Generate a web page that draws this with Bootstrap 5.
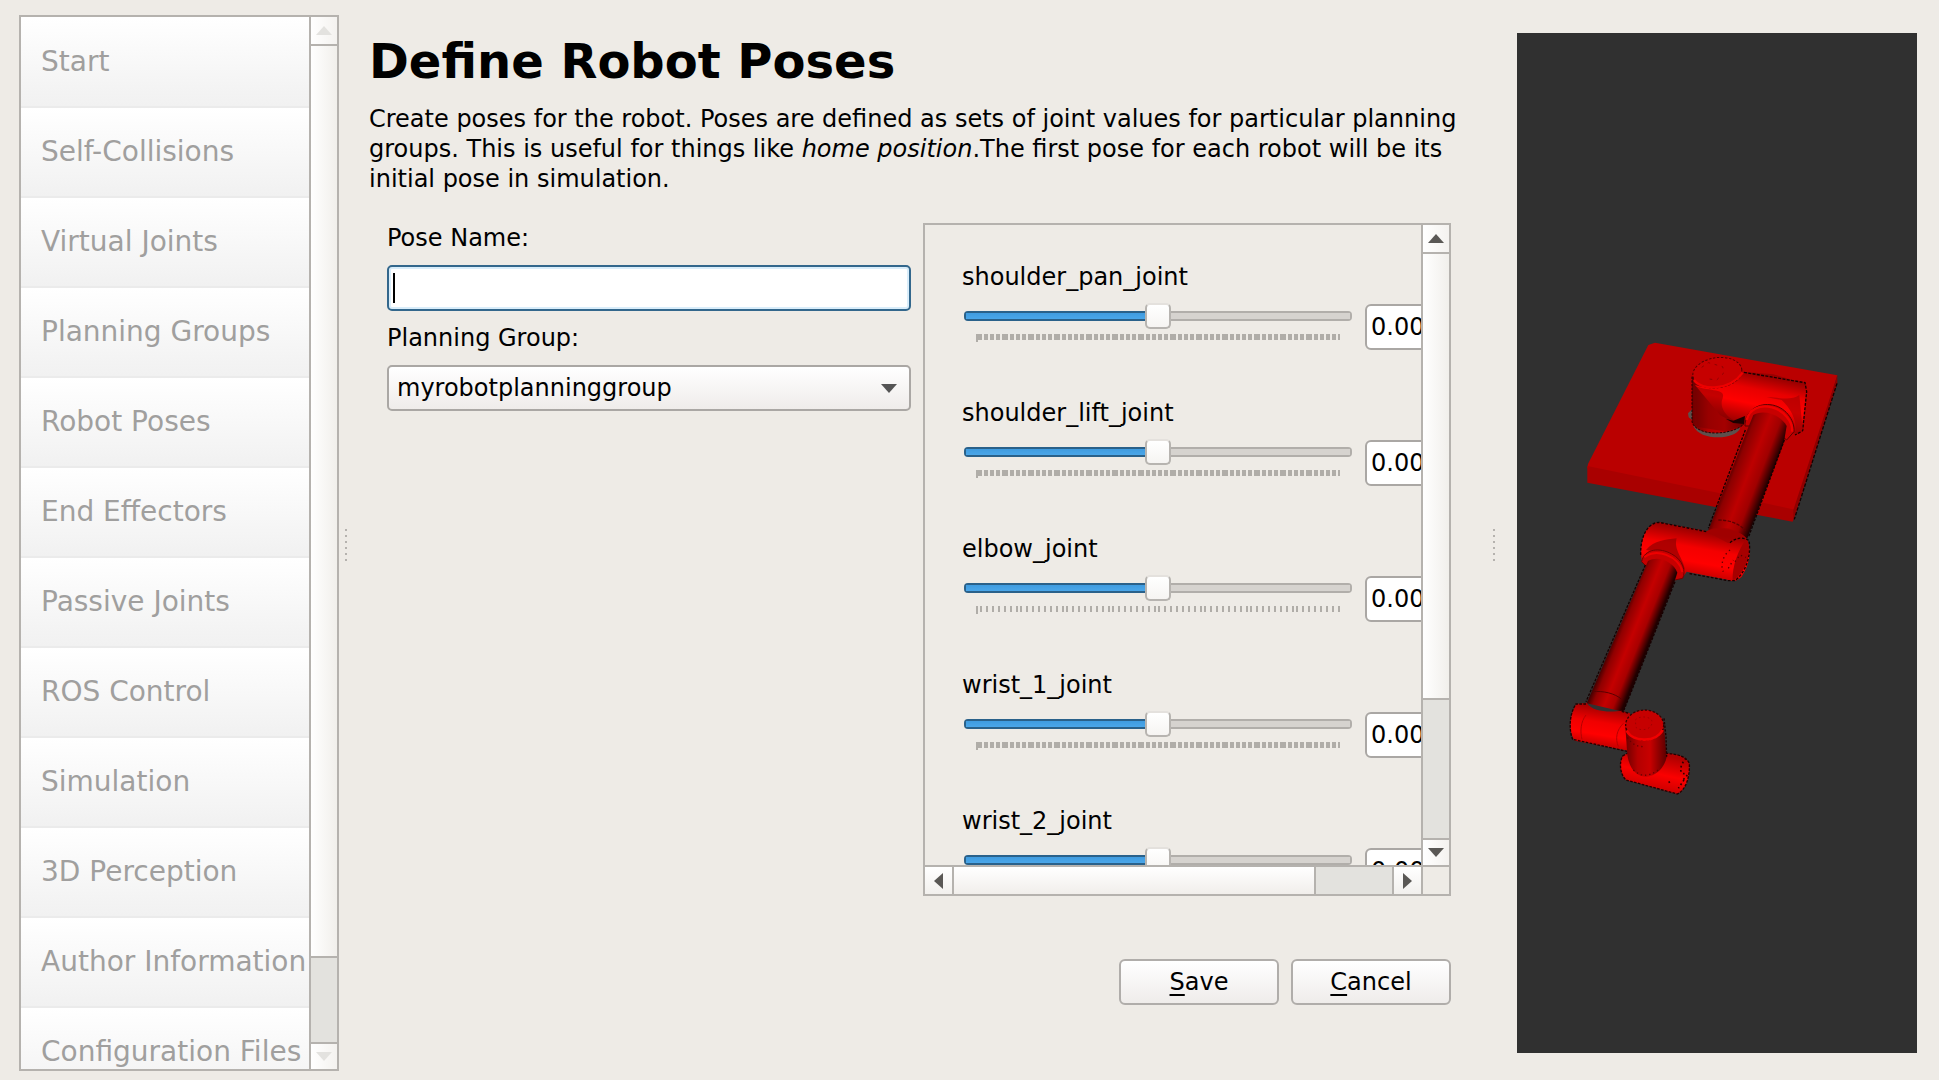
<!DOCTYPE html>
<html lang="en">
<head>
<meta charset="utf-8">
<meta name="viewport" content="width=device-width, initial-scale=1">
<title>Define Robot Poses</title>
<link href="https://cdn.jsdelivr.net/npm/bootstrap@5.3.0/dist/css/bootstrap.min.css" rel="stylesheet">
<style>
  :root { --edge: #b5b2ae; --face: #eeebe6; --groove: #e3e2de; }
  body { font-family: "DejaVu Sans", Verdana, sans-serif; font-size: 24px; line-height: 30px; color: #000; background: var(--face); }
  .app-shell { height: 100vh; padding: 15px 22px 9px 19px; }

  /* navigation list */
  .side-nav { width: 320px; border: 2px solid var(--edge); background: #fff; }
  .side-list { padding-top: 1px; }
  .side-list .list-group-item { height: 90px; flex: none; padding: 0 0 0 20px; border: 0; border-bottom: 2px solid #ebebeb; border-radius: 0;
    font-size: 28px; line-height: 88px; white-space: nowrap; color: #a09f9e; background: linear-gradient(#fff, #f1f1f1); }

  /* scroll bars */
  .vbar { width: 28px; border-left: 2px solid var(--edge); background: var(--groove); }
  .hbar { height: 29px; border-top: 2px solid var(--edge); background: var(--groove); }
  .bar-btn { padding: 0; border: 0; background: linear-gradient(90deg, #fff, #f4f2ef); display: flex; align-items: center; justify-content: center; }
  .vbar .bar-btn { height: 27px; }
  .hbar .bar-btn { width: 27px; background: linear-gradient(#fff, #f2f0ed); }
  .vthumb { background: linear-gradient(90deg, #fff, #f1efeb); border: solid var(--edge); border-width: 2px 0; }
  .hthumb { background: linear-gradient(#fff, #f1eeeb); border: solid var(--edge); border-width: 0 2px; }
  .bar-btn svg { fill: #5a5855; display: block; }
  .side-nav .bar-btn svg { fill: #e3e2df; }
  .side-nav .vthumb { flex: 903; } .side-nav .vrest { flex: 83; }
  .joint-pane .vthumb { flex: 449; } .joint-pane .vrest { flex: 139; }
  .joint-pane .hthumb { flex: 364; } .joint-pane .hrest { flex: 77; }
  .bar-end { border-top: 2px solid var(--edge); }
  .hbar .bar-end { border-top: 0; border-left: 2px solid var(--edge); width: 29px; }
  .bar-corner { width: 28px; border-left: 2px solid var(--edge); background: var(--face); }

  /* splitter grips */
  .grip { width: 30px; padding: 4px 0 0 6px; }
  .grip.wide-grip { width: 48px; padding-left: 24px; }
  .grip-dots { width: 2px; height: 32px; background: repeating-linear-gradient(#b5b2ae 0 2px, transparent 2px 6px); }

  /* main column */
  .page-title { font-size: 48px; line-height: 56px; font-weight: 700; margin: 18px 0 15px; }
  .intro { margin: 0 0 29px; }
  .form-area { padding: 0 18px; gap: 12px; }
  .form-area > * { flex: 1 1 0; min-width: 0; }
  .field { height: 46px; font-size: 24px; line-height: 30px; padding: 6px 8px; border: 2px solid #aaa7a4; border-radius: 5px; color: #000; width: 100%; }
  .field.name-field { border-color: #33678c; box-shadow: inset 0 0 0 2px #d9edfa; background: linear-gradient(#000, #000) 4px 50% / 2px 30px no-repeat, #fff; }
  .field.group-field { appearance: none; background: url("data:image/svg+xml,%3Csvg xmlns='http://www.w3.org/2000/svg' viewBox='0 0 16 9'%3E%3Cpath fill='%23555' d='M0 0h16L8 9z'/%3E%3C/svg%3E") right 12px center / 16px 9px no-repeat, linear-gradient(#fff, #efecea); }
  .field-label { margin: 0 0 12px; display: block; }
  .field + .field-label { margin-top: 12px; }
  .joint-pane { height: 673px; border: 2px solid var(--edge); }
  .joint-list { padding: 37px 0 0 37px; gap: 28px; width: 640px; }
  .joint-item { height: 108px; flex: none; }
  .joint-ctl { gap: 12px; margin: 12px 0 0 2px; }
  .joint-name { display: block; height: 30px; }
  .slide-box { width: 389px; }
  .joint-range { appearance: none; -webkit-appearance: none; display: block; width: 388px; height: 24px; margin: 0; background: transparent; }
  .joint-range::-webkit-slider-runnable-track { height: 10px; border-radius: 4px;
    background: linear-gradient(#2a618a, #2a618a) 0 0 / 50% 2px no-repeat, linear-gradient(#2a618a, #2a618a) 0 100% / 50% 2px no-repeat, linear-gradient(#2a618a, #2a618a) 0 0 / 2px 100% no-repeat, linear-gradient(#3c98dc, #4eaaec) 0 0 / 50% 100% no-repeat, linear-gradient(#b1aeaa, #b1aeaa) 0 0 / 100% 2px no-repeat, linear-gradient(#b1aeaa, #b1aeaa) 0 100% / 100% 2px no-repeat, linear-gradient(#b1aeaa, #b1aeaa) 100% 0 / 2px 100% no-repeat, #d6d3cf; }
  .joint-range::-webkit-slider-thumb { appearance: none; -webkit-appearance: none; width: 26px; height: 26px; margin-top: -8px; border: 2px solid #b7b4b0; border-top-color: #e4e1dd; border-radius: 5px; background: linear-gradient(#fff, #f6f4f2); }
  .tick-marks { display: block; width: 366px; height: 8px; margin: 6px 0 0 12px; }
  .joint-value { width: 130px; padding: 6px 4px; border-radius: 6px; background: #fff; }

  .dlg-btn { width: 160px; height: 46px; padding: 0; font-size: 24px; line-height: 30px; color: #000; border: 2px solid #b0adaa; border-radius: 6px; background: linear-gradient(#fff, #efecea); }
  .dlg-btn u { text-underline-offset: 4px; text-decoration-thickness: 2px; text-decoration-skip-ink: none; }
  .actions { gap: 12px; padding: 0 18px; margin-top: 63px; }

  .view3d { width: 400px; margin: 18px 0 18px; background: #303030; }
</style>
</head>
<body>
<div class="app-shell d-flex overflow-hidden">
  <nav class="side-nav d-flex flex-shrink-0" aria-label="Setup steps">
    <div class="side-list list-group rounded-0 flex-grow-1 overflow-hidden">
      <a class="list-group-item disabled" aria-disabled="true" href="#">Start</a>
      <a class="list-group-item disabled" aria-disabled="true" href="#">Self-Collisions</a>
      <a class="list-group-item disabled" aria-disabled="true" href="#">Virtual Joints</a>
      <a class="list-group-item disabled" aria-disabled="true" href="#">Planning Groups</a>
      <a class="list-group-item disabled" aria-disabled="true" href="#">Robot Poses</a>
      <a class="list-group-item disabled" aria-disabled="true" href="#">End Effectors</a>
      <a class="list-group-item disabled" aria-disabled="true" href="#">Passive Joints</a>
      <a class="list-group-item disabled" aria-disabled="true" href="#">ROS Control</a>
      <a class="list-group-item disabled" aria-disabled="true" href="#">Simulation</a>
      <a class="list-group-item disabled" aria-disabled="true" href="#">3D Perception</a>
      <a class="list-group-item disabled" aria-disabled="true" href="#">Author Information</a>
      <a class="list-group-item disabled" aria-disabled="true" href="#">Configuration Files</a>
    </div>
    <div class="vbar d-flex flex-column flex-shrink-0">
      <button class="bar-btn" type="button" disabled aria-label="Scroll up"><svg width="16" height="9" viewBox="0 0 16 9"><path d="M0 9h16L8 0z"/></svg></button>
      <div class="vthumb"></div><div class="vrest"></div>
      <button class="bar-btn bar-end" type="button" disabled aria-label="Scroll down"><svg width="16" height="9" viewBox="0 0 16 9"><path d="M0 0h16L8 9z"/></svg></button>
    </div>
  </nav>
  <div class="grip d-flex align-items-center flex-shrink-0"><div class="grip-dots"></div></div>

  <main class="flex-grow-1">
    <h1 class="page-title">Define Robot Poses</h1>
    <p class="intro">Create poses for the robot. Poses are defined as sets of joint values for particular planning groups. This is useful for things like <i>home position</i>.The first pose for each robot will be its initial pose in simulation.</p>
    <div class="form-area d-flex">
      <form>
        <label class="field-label" for="poseName">Pose Name:</label>
        <input class="field name-field" id="poseName" type="text">
        <label class="field-label" for="planGroup">Planning Group:</label>
        <select class="field group-field" id="planGroup"><option>myrobotplanninggroup</option></select>
      </form>
      <section class="joint-pane d-flex flex-column" aria-label="Joint values">
        <div class="d-flex flex-grow-1 overflow-hidden">
          <div class="flex-grow-1 overflow-hidden">
            <div class="joint-list d-flex flex-column" id="joints"></div>
          </div>
          <div class="vbar d-flex flex-column flex-shrink-0">
            <button class="bar-btn" type="button" aria-label="Scroll up"><svg width="16" height="9" viewBox="0 0 16 9"><path d="M0 9h16L8 0z"/></svg></button>
            <div class="vthumb"></div><div class="vrest"></div>
            <button class="bar-btn bar-end" type="button" aria-label="Scroll down"><svg width="16" height="9" viewBox="0 0 16 9"><path d="M0 0h16L8 9z"/></svg></button>
          </div>
        </div>
        <div class="hbar d-flex flex-shrink-0">
          <button class="bar-btn" type="button" aria-label="Scroll left"><svg width="9" height="16" viewBox="0 0 9 16"><path d="M9 0v16L0 8z"/></svg></button>
          <div class="hthumb"></div><div class="hrest"></div>
          <button class="bar-btn bar-end" type="button" aria-label="Scroll right"><svg width="9" height="16" viewBox="0 0 9 16"><path d="M0 0v16L9 8z"/></svg></button>
          <div class="bar-corner"></div>
        </div>
      </section>
    </div>
    <div class="actions d-flex justify-content-end">
      <button class="dlg-btn" type="button"><u>S</u>ave</button>
      <button class="dlg-btn" type="button"><u>C</u>ancel</button>
    </div>
  </main>
  <div class="grip wide-grip d-flex align-items-center flex-shrink-0"><div class="grip-dots"></div></div>

  <div class="view3d flex-shrink-0">
    <svg width="100%" height="100%" viewBox="1517 33 400 1020" preserveAspectRatio="xMidYMid slice" role="img" aria-label="Robot model">
      <defs>
        <linearGradient id="tubeA" gradientUnits="userSpaceOnUse" x1="505" y1="430" x2="630" y2="478"><stop offset="0" stop-color="#240000"/><stop offset=".2" stop-color="#8c0000"/><stop offset=".5" stop-color="#bd0000"/><stop offset=".75" stop-color="#a00000"/><stop offset="1" stop-color="#180000"/></linearGradient>
        <linearGradient id="tubeB" gradientUnits="userSpaceOnUse" x1="205" y1="365" x2="305" y2="405"><stop offset="0" stop-color="#300000"/><stop offset=".2" stop-color="#900000"/><stop offset=".5" stop-color="#c40000"/><stop offset=".75" stop-color="#a80000"/><stop offset="1" stop-color="#200000"/></linearGradient>
        <linearGradient id="base" x1="0" x2="1"><stop offset="0" stop-color="#6c0000"/><stop offset=".3" stop-color="#b40000"/><stop offset=".6" stop-color="#c80000"/><stop offset="1" stop-color="#5a0000"/></linearGradient>
        <linearGradient id="arm" gradientUnits="userSpaceOnUse" x1="600" y1="165" x2="570" y2="310"><stop offset="0" stop-color="#9a0000"/><stop offset=".3" stop-color="#e80000"/><stop offset=".6" stop-color="#ff0000"/><stop offset="1" stop-color="#a00000"/></linearGradient>
        <linearGradient id="elbow" gradientUnits="userSpaceOnUse" x1="450" y1="95" x2="425" y2="235"><stop offset="0" stop-color="#a00000"/><stop offset=".35" stop-color="#f40000"/><stop offset=".65" stop-color="#ff0000"/><stop offset="1" stop-color="#b80000"/></linearGradient>
        <linearGradient id="wrist" gradientUnits="userSpaceOnUse" x1="165" y1="625" x2="145" y2="748"><stop offset="0" stop-color="#a80000"/><stop offset=".35" stop-color="#f00000"/><stop offset=".65" stop-color="#ff0000"/><stop offset="1" stop-color="#b00000"/></linearGradient>
        <linearGradient id="tool" gradientUnits="userSpaceOnUse" x1="340" y1="765" x2="315" y2="880"><stop offset="0" stop-color="#b00000"/><stop offset=".5" stop-color="#fb0000"/><stop offset="1" stop-color="#c00000"/></linearGradient>
      </defs>
      <!-- table plate, shoulder and upper arm -->
      <g transform="translate(1560 320) scale(.33333)">
        <path fill="#ba0000" d="M285 68 832 166 708 575 82 445 84 432 265 75z"/>
        <path fill="#a90000" d="M82 438 480 520 708 570 698 605 82 488z"/>
        <path fill="#900000" d="M832 166 832 190 700 603 700 570z"/>
        <path fill="none" stroke="#160000" stroke-width="4" stroke-dasharray="10 5" d="M831 190 703 598"/>
        <path fill="#5d504c" d="M396 268 384 280 386 292 396 300zM400 318C412 342 440 352 475 352 505 351 530 343 540 326L535 312 405 312z"/>
        <path fill="url(#base)" stroke="#200000" stroke-width="3" stroke-dasharray="7 4" d="M396 170V305C400 325 430 340 470 339 505 338 535 328 552 312L560 160z"/>
        <path fill="url(#arm)" d="M405 195C470 215 515 195 550 155L640 163 735 190C742 235 735 300 718 342L690 340C690 300 640 262 600 266 575 270 560 290 555 312 530 305 500 298 480 285z"/>
        <path fill="none" stroke="#180000" stroke-width="4" stroke-dasharray="9 4" d="M552 157 735 188 740 215 728 332 705 345"/>
        <path fill="#6f0000" d="M405 198C450 215 500 205 488 235 476 262 500 300 550 312L500 335 410 320z" opacity=".4"/>
        <ellipse cx="472" cy="158" rx="74" ry="45" fill="#c60000" stroke="#500000" stroke-width="3" stroke-dasharray="7 5" transform="rotate(-8 472 158)"/>
        <path fill="none" stroke="#ed0000" stroke-width="7" d="M402 180C425 213 510 212 548 158"/>
        <path fill="none" stroke="#8d0000" stroke-width="3" stroke-dasharray="8 14" d="M425 142 445 128 488 140 492 158 470 180 440 176"/>
        <path fill="#1d0000" d="M497 296 520 302 555 288 552 312 520 309z"/>
        <path fill="#a00000" d="M718 225 728 330 707 342C712 305 695 268 665 240L620 232C650 230 690 245 718 225z" opacity=".6"/>
        <path fill="#c70000" stroke="#5a0000" stroke-width="3" d="M555 318C555 275 590 250 630 254 675 258 705 300 702 335L680 360 655 340 580 318z"/>
        <path fill="none" stroke="#f00000" stroke-width="7" d="M560 300C568 268 598 253 636 262 670 270 700 305 696 335"/>
        <path fill="url(#tubeA)" d="M580 285C605 268 660 280 680 318L672 365 562 655 445 630 565 322z"/>
        <path fill="none" stroke="#100000" stroke-width="4" stroke-dasharray="8 4" d="M556 330 445 625M673 360 566 650"/>
        <path fill="none" stroke="#5c0000" stroke-width="4" stroke-dasharray="10 4" d="M475 600C510 600 540 612 556 632"/>
      </g>
      <!-- elbow, forearm and wrist -->
      <g transform="translate(1550 500) scale(.33333)">
        <path fill="url(#elbow)" d="M325 66 470 93C510 80 570 90 590 115 603 140 605 185 575 230 563 242 550 246 535 240L410 215 395 236 275 180C268 115 290 70 325 66z"/>
        <path fill="#a00000" opacity=".7" d="M470 95C490 75 560 80 582 112L535 130z"/>
        <path fill="#a60000" d="M590 115C605 150 598 205 548 244 545 200 565 150 590 115z"/>
        <path fill="none" stroke="#160000" stroke-width="4" stroke-dasharray="8 5" d="M272 165C270 105 298 62 332 68L470 95M540 128C560 110 585 112 597 122 603 155 595 210 555 242L535 242 415 220"/>
        <path fill="none" stroke="#5b0000" stroke-width="4" stroke-dasharray="4 10" d="M540 150C520 165 510 195 520 215M555 185 570 165 588 172M535 205 550 180"/>
        <path fill="#880000" opacity=".65" d="M288 150C315 120 345 120 380 115 370 150 400 175 405 210 375 175 330 155 288 150z"/>
        <path fill="#c60000" stroke="#700000" stroke-width="3" d="M275 185C283 145 330 142 365 162 400 180 408 215 398 235L375 240 290 200z"/>
        <path fill="none" stroke="#f00000" stroke-width="6" d="M283 172C315 142 388 168 397 216"/>
        <path fill="url(#tubeB)" d="M294 183C325 165 370 185 382 218L372 250 220 635 110 610z"/>
        <path fill="none" stroke="#160000" stroke-width="4" stroke-dasharray="8 4" d="M286 195 108 605M375 245 222 630"/>
        <path fill="none" stroke="#580000" stroke-width="3" d="M128 575C160 572 195 580 215 598"/>
        <path fill="url(#wrist)" d="M80 612 110 608C130 640 190 635 215 632L240 640 250 755 75 722C55 700 58 640 80 612z"/>
        <path fill="none" stroke="#220000" stroke-width="4" stroke-dasharray="8 4" d="M108 612 78 612C58 640 56 690 68 718L240 756M215 634 238 640"/>
        <path fill="none" stroke="#b40000" stroke-width="3" d="M108 645C92 665 90 695 96 718M220 670C200 690 195 715 205 740"/>
        <path fill="url(#tool)" stroke="#240000" stroke-width="4" stroke-dasharray="8 4" d="M218 768 240 755 350 760C385 762 408 770 418 790 420 830 408 870 382 882L228 840C208 820 208 785 218 768z"/>
        <path fill="none" stroke="#300000" stroke-width="5" stroke-dasharray="5 8" d="M408 775C385 800 390 825 405 820M402 840 385 865M360 845 350 850M412 825 395 845"/>
        <path fill="url(#base)" d="M226 680 232 765C238 805 258 830 290 830 320 828 345 800 350 770L342 680z"/>
        <path fill="none" stroke="#1c0000" stroke-width="4" stroke-dasharray="7 4" d="M342 655 348 710 350 770"/>
        <path fill="none" stroke="#650000" stroke-width="4" stroke-dasharray="4 9" d="M232 712C250 738 265 740 285 740M250 810C275 832 295 830 325 810"/>
        <ellipse cx="284" cy="675" rx="57" ry="45" fill="#c60000" stroke="#380000" stroke-width="4" stroke-dasharray="7 5"/>
        <path fill="none" stroke="#f20000" stroke-width="8" d="M230 692C250 730 320 726 338 690"/>
        <path fill="none" stroke="#a00000" stroke-width="3" stroke-dasharray="5 8" d="M256 660C270 645 305 650 306 665 308 690 270 695 258 682z"/>
      </g>
    </svg>
  </div>
</div>

<script>
  const joints = [
    { name: "shoulder_pan_joint", ticks: 126 },
    { name: "shoulder_lift_joint", ticks: 126 },
    { name: "elbow_joint", ticks: 64 },
    { name: "wrist_1_joint", ticks: 126 },
    { name: "wrist_2_joint", ticks: 126 }
  ];
  // Tick marks snap to a two-pixel raster; the first is taller.
  function tickPath(count) {
    let d = "M0 0h2v8h-2z";
    for (let i = 1; i < count; i++) d += `M${Math.floor(i * 362 / (count - 1) / 2) * 2} 0h2v6h-2z`;
    return d;
  }
  document.getElementById("joints").innerHTML = joints.map((j, i) => `
    <div class="joint-item">
      <label class="joint-name" for="j${i}">${j.name}</label>
      <div class="joint-ctl d-flex">
        <div class="slide-box">
          <input class="joint-range" id="j${i}" type="range" min="-100" max="100" value="0">
          <svg class="tick-marks" viewBox="0 0 366 8" shape-rendering="crispEdges"><path fill="#b0ada8" d="${tickPath(j.ticks)}"/></svg>
        </div>
        <input class="field joint-value" type="text" value="0.0000" aria-label="${j.name} value">
      </div>
    </div>`).join("");
</script>
<script src="https://cdn.jsdelivr.net/npm/bootstrap@5.3.0/dist/js/bootstrap.bundle.min.js"></script>
</body>
</html>
